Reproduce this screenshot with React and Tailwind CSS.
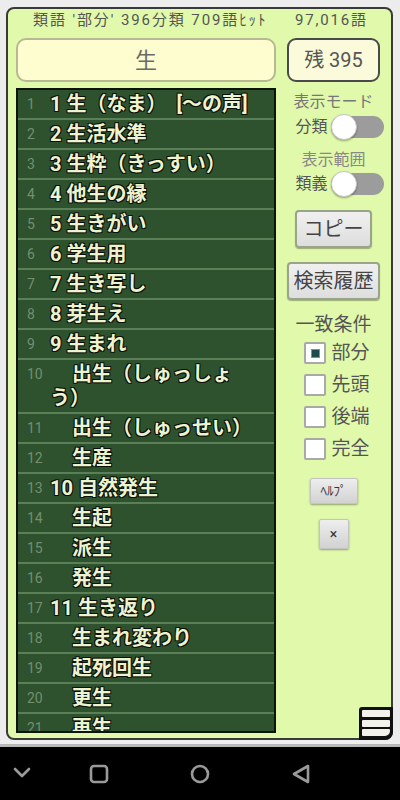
import React from "react";

const rows = [
  { n: 1, t: "1 生（なま）　[～の声]" },
  { n: 2, t: "2 生活水準" },
  { n: 3, t: "3 生粋（きっすい）" },
  { n: 4, t: "4 他生の縁" },
  { n: 5, t: "5 生きがい" },
  { n: 6, t: "6 学生用" },
  { n: 7, t: "7 生き写し" },
  { n: 8, t: "8 芽生え" },
  { n: 9, t: "9 生まれ" },
  { n: 10, t: "出生（しゅっしょう）", sub: true },
  { n: 11, t: "出生（しゅっせい）", sub: true },
  { n: 12, t: "生産", sub: true },
  { n: 13, t: "10 自然発生" },
  { n: 14, t: "生起", sub: true },
  { n: 15, t: "派生", sub: true },
  { n: 16, t: "発生", sub: true },
  { n: 17, t: "11 生き返り" },
  { n: 18, t: "生まれ変わり", sub: true },
  { n: 19, t: "起死回生", sub: true },
  { n: 20, t: "更生", sub: true },
  { n: 21, t: "再生", sub: true },
];

const font = { fontFamily: 'Roboto, "Noto Sans CJK JP", sans-serif' };

function Switch() {
  return (
    <div className="relative w-[53px] h-[26px] flex items-center">
      <div className="w-[53px] h-[22px] rounded-full bg-[#9c9c9c]" />
      <div className="absolute left-0 top-0 w-[26px] h-[26px] rounded-full bg-white border border-[#c8c8c8] shadow-[0_1px_2px_rgba(0,0,0,0.35)]" />
    </div>
  );
}

function Check({ label, checked }) {
  return (
    <div className="h-[32px] flex items-center gap-[5px] ml-[7px]">
      <div className="w-[22px] h-[22px] bg-white border-2 border-[#a9a9a9] rounded-[2px] flex items-center justify-center">
        {checked && <div className="w-[9px] h-[9px] bg-[#1d4a4c] border border-[#6c9a9a]" />}
      </div>
      <span className="text-[19px] leading-[24px] text-[#555]">{label}</span>
    </div>
  );
}

export default function App() {
  return (
    <div className="w-[400px] h-[800px] bg-[#ececec] flex flex-col overflow-hidden" style={font}>
      <div className="mt-[7px] ml-[6px] w-[387px] h-[733px] relative border-2 border-[#3a3a3a] rounded-[8px] bg-[#e1f9ab] flex flex-col">
        {/* header */}
        <div className="h-[22px] flex items-center text-[15px] text-[#555] leading-[22px]">
          <div className="ml-[25px] w-[262px] shrink-0 whitespace-nowrap tracking-[1.9px]">類語 '部分' 396分類 709語ﾋｯﾄ</div>
          <div className="whitespace-nowrap tracking-[1.8px]">97,016語</div>
        </div>
        {/* search row */}
        <div className="mt-[7px] flex items-center pl-[8px]">
          <div className="w-[260px] h-[44px] rounded-[10px] bg-[#fdfdcf] border-2 border-[#b8b894] flex items-center justify-center text-[22px] text-[#6a6a6a]">
            生
          </div>
          <div className="ml-[11px] w-[93px] h-[44px] rounded-[9px] bg-[#fbfbdc] border-2 border-[#4a4a4a] flex items-center justify-center text-[20px] text-[#555]">
            残 395
          </div>
        </div>
        {/* content */}
        <div className="mt-[6px] flex pl-[8px]">
          <div className="w-[260px] h-[645px] border-2 border-[#0c140c] bg-[#2d502d] overflow-hidden">
            {rows.map((r) => (
              <div key={r.n} className="flex border-b-2 border-[#5b7f56] bg-[#2e512e]">
                <div className="w-[32px] shrink-0 pl-[9px] text-[14px] leading-[28px] text-[#738f70]">{r.n}</div>
                <div
                  className={
                    "flex-1 pr-[16px] py-[2px] text-[20px] leading-[24px] font-bold text-[#eef3cf] [text-shadow:1px_1px_0_#0a100a,-1px_-1px_0_#0a100a,1px_-1px_0_#0a100a,-1px_1px_0_#0a100a] " +
                    (r.sub ? "indent-[22px]" : "")
                  }
                >
                  {r.t}
                </div>
              </div>
            ))}
          </div>
          {/* right column */}
          <div className="flex-1 flex flex-col items-center">
            <div className="mt-[4px] text-[16px] leading-[20px] text-[#777]">表示モード</div>
            <div className="mt-[2px] ml-[12px] flex items-center gap-[3px]">
              <span className="text-[16px] leading-[20px] text-[#555]">分類</span>
              <Switch />
            </div>
            <div className="mt-[10px] text-[16px] leading-[20px] text-[#888]">表示範囲</div>
            <div className="mt-[1px] ml-[12px] flex items-center gap-[3px]">
              <span className="text-[16px] leading-[20px] text-[#555]">類義</span>
              <Switch />
            </div>
            <div className="mt-[13px] w-[77px] h-[38px] rounded-[4px] border-2 border-[#9aa48a] bg-gradient-to-b from-[#f0f0f0] to-[#dedede] shadow-[0_1px_1px_rgba(0,0,0,0.3)] flex items-center justify-center text-[20px] text-[#444]">
              コピー
            </div>
            <div className="mt-[14px] w-[93px] h-[38px] rounded-[4px] border-2 border-[#9aa48a] bg-gradient-to-b from-[#f0f0f0] to-[#dedede] shadow-[0_1px_1px_rgba(0,0,0,0.3)] flex items-center justify-center text-[20px] text-[#444]">
              検索履歴
            </div>
            <div className="mt-[13px] text-[19px] leading-[24px] text-[#555]">一致条件</div>
            <div className="flex flex-col">
              <Check label="部分" checked />
              <Check label="先頭" />
              <Check label="後端" />
              <Check label="完全" />
            </div>
            <div className="mt-[13px] w-[48px] h-[26px] rounded-[2px] bg-gradient-to-b from-[#eeeeee] to-[#d2d2d2] border border-[#c4c4c4] shadow-[0_1px_2px_rgba(0,0,0,0.35)] flex items-center justify-center text-[13px] text-[#333]">
              ﾍﾙﾌﾟ
            </div>
            <div className="mt-[15px] w-[30px] h-[30px] rounded-[2px] bg-gradient-to-b from-[#eeeeee] to-[#d2d2d2] border border-[#c4c4c4] shadow-[0_1px_2px_rgba(0,0,0,0.35)] flex items-center justify-center text-[14px] text-[#333]">
              ×
            </div>
          </div>
        </div>
        {/* hamburger */}
        <div className="absolute right-[-2px] bottom-[-2px] w-[34px] h-[33px] bg-[#111] border-2 border-[#111] rounded-br-[8px] rounded-tl-[3px] flex flex-col justify-between p-[1px] pb-[2px]">
          <div className="h-[7px] bg-[#f2f2ea] rounded-[1px]" />
          <div className="h-[7px] bg-[#f2f2ea] rounded-[1px]" />
          <div className="h-[7px] bg-[#f2f2ea] rounded-[1px] rounded-br-[5px]" />
        </div>
      </div>
      <div className="h-[4px] bg-[#eeeeee]" />
      <div className="h-[3px] bg-[#b8b8b8]" />
      <div className="flex-1 bg-black relative flex items-center">
        <svg width="400" height="53" viewBox="0 0 400 53" className="block">
          <g fill="none" stroke="#9a9a9a" strokeWidth="2.6" strokeLinecap="round" strokeLinejoin="round">
            <polyline points="15,22 22,29 29,22" />
            <rect x="91" y="19" width="16" height="16" rx="3" />
            <circle cx="200" cy="27" r="8" />
            <polygon points="308,19 308,35 294,27" />
          </g>
        </svg>
      </div>
    </div>
  );
}
